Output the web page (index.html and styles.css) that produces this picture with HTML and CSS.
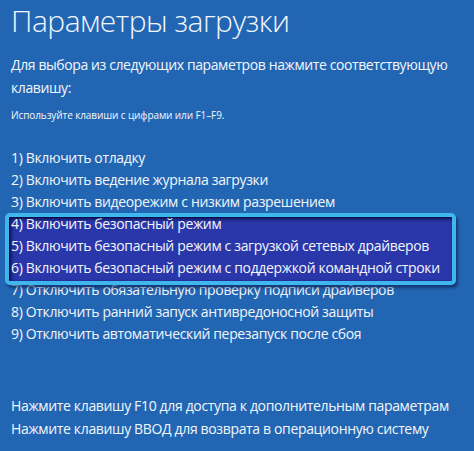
FILE: index.html
```html
<!DOCTYPE html>
<html lang="ru">
<head>
<meta charset="utf-8">
<link rel="stylesheet" href="styles.css">
</head>
<body>
<div class="screen">
  <h1 class="title">Параметры загрузки</h1>
  <p class="intro">Для выбора из следующих параметров нажмите соответствующую клавишу:</p>
  <p class="hint">Используйте клавиши с цифрами или F1–F9.</p>
  <ol class="options">
    <li>1) Включить отладку</li>
    <li>2) Включить ведение журнала загрузки</li>
    <li>3) Включить видеорежим с низким разрешением</li>
    <li>4) Включить безопасный режим</li>
    <li>5) Включить безопасный режим с загрузкой сетевых драйверов</li>
    <li>6) Включить безопасный режим с поддержкой командной строки</li>
    <li>7) Отключить обязательную проверку подписи драйверов</li>
    <li>8) Отключить ранний запуск антивредоносной защиты</li>
    <li>9) Отключить автоматический перезапуск после сбоя</li>
    <div class="highlight"></div>
  </ol>
  <div class="footer">
    <p>Нажмите клавишу F10 для доступа к дополнительным параметрам</p>
    <p>Нажмите клавишу ВВОД для возврата в операционную систему</p>
  </div>
</div>
</body>
</html>
```
FILE: styles.css
```css
html, body {
  margin: 0;
  padding: 0;
  background: #2266b3;
}
.screen {
  width: 474px;
  height: 451px;
  box-sizing: border-box;
  padding: 0 0 0 11px;
  font-family: "Open Sans", "Noto Sans", sans-serif;
  color: #f2f6fb;
  display: flex;
  flex-direction: column;
  overflow: hidden;
}
.title {
  margin: 1px 0 0 0;
  font-size: 30px;
  font-weight: 300;
  line-height: 40px;
  letter-spacing: -0.5px;
}
.intro {
  margin: 12px 0 0 0;
  font-size: 14px;
  line-height: 23px;
  letter-spacing: -0.4px;
  width: 460px;
}
.hint {
  margin: 8px 0 0 0;
  font-size: 10px;
  line-height: 16px;
  letter-spacing: -0.1px;
}
.options {
  list-style: none;
  margin: 24px 0 0 0;
  padding: 0;
  position: relative;
  font-size: 14px;
  line-height: 22px;
  letter-spacing: -0.35px;
}
.options li {
  position: relative;
  z-index: 1;
}
.highlight {
  position: absolute;
  left: -2px;
  top: 70px;
  width: 443px;
  height: 64px;
  background: #2a37aa;
  box-shadow: inset 2px 2px 4px rgba(0,0,40,0.7);
}
.highlight::after {
  content: "";
  position: absolute;
  left: -4px;
  top: -4px;
  right: -4px;
  bottom: -4px;
  z-index: 2;
  border: 4px solid #3fb6ec;
  border-radius: 5px;
  box-shadow: inset 1px 1px 2px rgba(0,0,50,0.6), 2px 3px 3px rgba(10,30,80,0.6);
}
.footer {
  margin-top: auto;
  margin-bottom: 11px;
  font-size: 14px;
  line-height: 23px;
  letter-spacing: -0.35px;
}
.footer p {
  margin: 0;
}
```
